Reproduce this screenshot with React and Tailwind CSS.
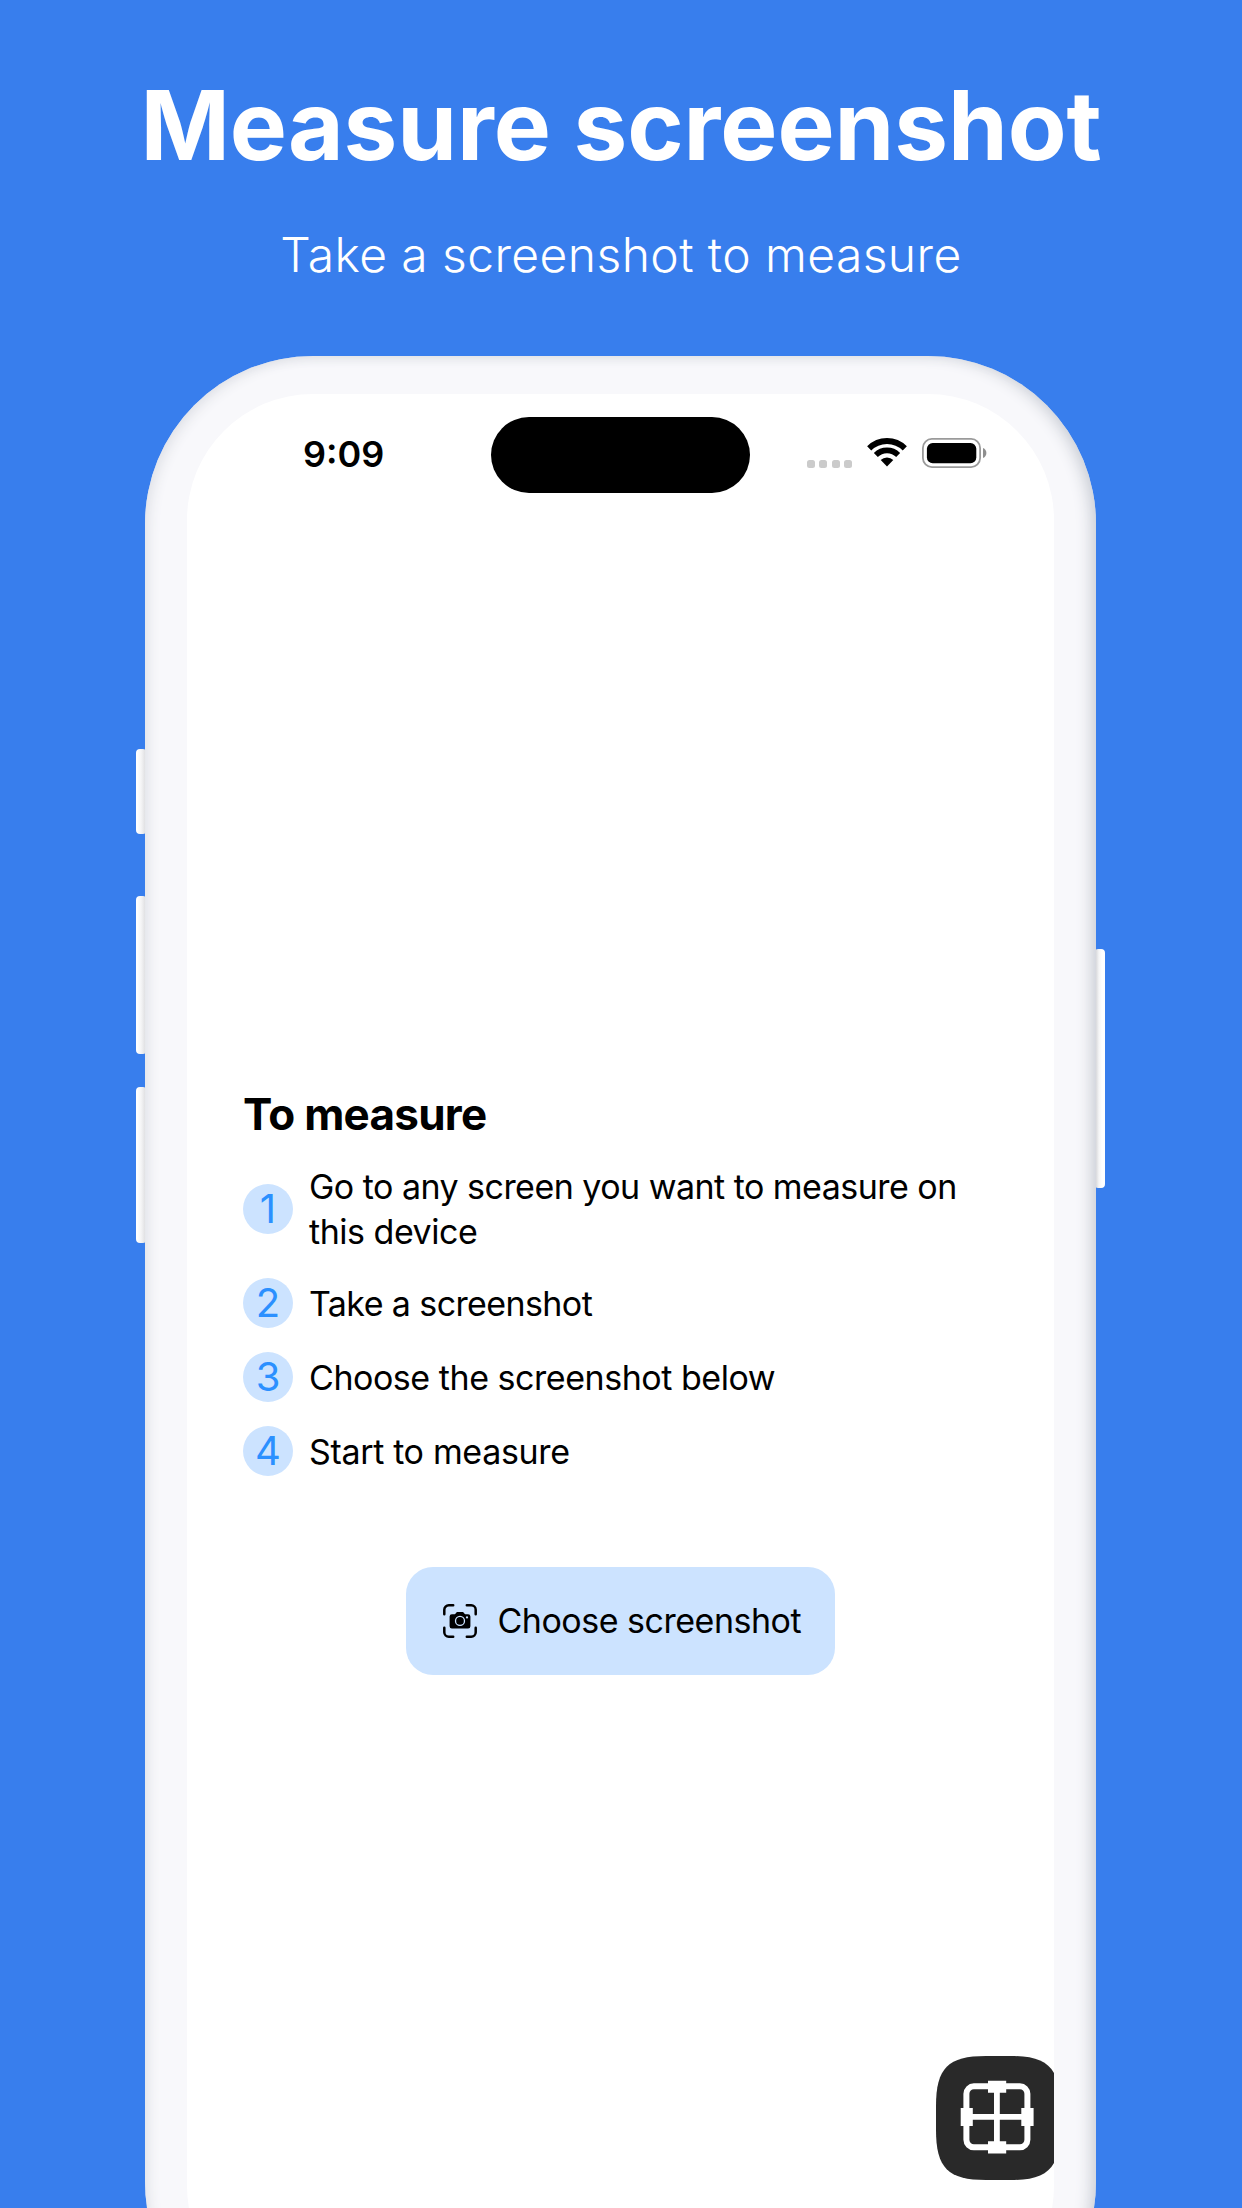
const steps = [
  { lines: ["Go to any screen you want to measure on", "this device"], tracking: ["tracking-[-0.53px]", "tracking-[-0.48px]"], badge: "mt-[1px]" },
  { lines: ["Take a screenshot"], tracking: ["tracking-[-0.6px]"], badge: "" },
  { lines: ["Choose the screenshot below"], tracking: ["tracking-[-0.46px]"], badge: "" },
  { lines: ["Start to measure"], tracking: ["tracking-[-0.34px]"], badge: "" },
];

function WifiIcon() {
  return (
    <svg className="ml-[15.5px] h-[29px] w-10" viewBox="0 0 40 29" fill="none">
      <path d="M2.18 10.38A25.2 25.2 0 0 1 37.82 10.38" stroke="#000" strokeWidth="5.8" />
      <path d="M8.83 17.03A15.8 15.8 0 0 1 31.17 17.03" stroke="#000" strokeWidth="5.6" />
      <path d="M20 28.6L13.7 22.1A8.9 8.9 0 0 1 26.3 22.1Z" fill="#000" />
    </svg>
  );
}

function BatteryIcon() {
  return (
    <svg className="ml-[15px] h-[30px] w-[65px]" viewBox="0 0 65 30" fill="none">
      <rect x="0.9" y="0.9" width="57.2" height="28.2" rx="9" stroke="#9a9a9a" strokeWidth="1.8" />
      <rect x="4.9" y="5" width="49.4" height="20.2" rx="5.8" fill="#000" />
      <path d="M61 10C63.2 10.8 64.4 12.8 64.4 15S63.2 19.2 61 20Z" fill="#8f8f8f" />
    </svg>
  );
}

function ViewfinderIcon() {
  return (
    <svg className="h-[34px] w-[34px]" viewBox="0 0 34 34" fill="none">
      <path
        d="M1.3 10.2V5.8A4.5 4.5 0 0 1 5.8 1.3H10.2M23.8 1.3H28.2A4.5 4.5 0 0 1 32.7 5.8V10.2M32.7 23.8V28.2A4.5 4.5 0 0 1 28.2 32.7H23.8M10.2 32.7H5.8A4.5 4.5 0 0 1 1.3 28.2V23.8"
        stroke="#000"
        strokeWidth="2.5"
        strokeLinecap="round"
      />
      <path
        d="M8.9 10.2H11.2C12 10.2 12.3 9.9 12.8 9.2C13.4 8.3 13.8 8 14.8 8H19.2C20.2 8 20.6 8.3 21.2 9.2C21.7 9.9 22 10.2 22.8 10.2H25.1A2.3 2.3 0 0 1 27.4 12.5V22.2A2.3 2.3 0 0 1 25.1 24.5H8.9A2.3 2.3 0 0 1 6.6 22.2V12.5A2.3 2.3 0 0 1 8.9 10.2Z"
        fill="#000"
      />
      <circle cx="17" cy="16.9" r="4.5" stroke="#cce3ff" strokeWidth="1.3" />
      <circle cx="24" cy="13.4" r="1.1" fill="#cce3ff" />
    </svg>
  );
}

function MeasureTile() {
  return (
    <svg className="absolute top-[1662px] left-[749px] h-[124px] w-[124px]" viewBox="0 0 124 124" fill="none">
      <path d="M0 50C0 12 12 0 50 0H74C112 0 124 12 124 50V74C124 112 112 124 74 124H50C12 124 0 112 0 74Z" fill="#292929" />
      <rect x="30.4" y="30.3" width="61" height="61" rx="7.5" stroke="#fff" strokeWidth="6" />
      <path d="M60.9 30V92M30 60.9H92" stroke="#fff" strokeWidth="5.8" />
      <path d="M52 24.7H70.2V36.7H52ZM52 85.3H70.2V97.6H52ZM24.7 52H36.8V70.1H24.7ZM85.3 52H97.6V70.1H85.3Z" fill="#fff" />
    </svg>
  );
}

const leftKey = "absolute left-[-9px] w-[10px] rounded-l-[4px] rounded-r-[3px] bg-linear-to-r from-white from-10% via-[#f5f5f6] via-50% to-[#dcdcdf]";

export default function App() {
  return (
    <main className="flex h-[2208px] w-[1242px] flex-col items-center overflow-hidden bg-[#387eed] pt-[67px] font-['Inter',sans-serif] text-black">
      <h1 className="text-[96px] leading-[116px] font-bold tracking-[-0.06px] whitespace-nowrap text-white">Measure screenshot</h1>
      <p className="mt-[42px] text-[48px] leading-[59px] font-light tracking-[0.41px] whitespace-nowrap text-white">Take a screenshot to measure</p>

      <div className="relative mt-[72px] mr-px h-[1994px] w-[951px] shrink-0">
        <div className={`${leftKey} top-[393px] h-[85px]`} />
        <div className={`${leftKey} top-[540px] h-[158px]`} />
        <div className={`${leftKey} top-[731px] h-[156px]`} />
        <div className="absolute top-[592.5px] right-[-9px] h-[239.5px] w-[10px] rounded-l-[3px] rounded-r-[4px] bg-linear-to-l from-white from-30% via-[#f5f5f6] via-60% to-[#d0d1d5]" />

        <div className="relative h-full w-full rounded-[168px] bg-[#f8f8fb] px-[42px] pt-[37.7px] shadow-[inset_10px_6px_14px_-8px_#dcdee4,inset_-11px_3px_16px_-7px_#c6cad2]">
          <section className="relative h-[1918px] overflow-hidden rounded-[126px] bg-white">
            <div className="flex h-[99px] items-center pt-[23.3px]">
              <div className="w-[304.3px] pb-[1px] pl-[116px] text-[36px] leading-[44px] font-semibold">9:09</div>
              <div className="h-[75.7px] w-[258.7px] rounded-full bg-black" />
              <div className="mt-[-4px] flex items-center pl-[56.8px]">
                <div className="mt-[21.5px] flex gap-[4.4px]">
                  {[0, 1, 2, 3].map((n) => (
                    <span key={n} className="h-[8px] w-[8px] rounded-[2.5px] bg-[#cbcbcb]" />
                  ))}
                </div>
                <WifiIcon />
                <BatteryIcon />
              </div>
            </div>

            <div className="mt-[595.3px] pl-[56px]">
              <h2 className="text-[44px] leading-[53px] font-bold tracking-[-0.73px]">To measure</h2>
              <ol className="mt-[23px] flex flex-col gap-[24.1px]">
                {steps.map((step, i) => (
                  <li key={i} className="flex min-h-[50px] items-center gap-[16px]">
                    <span className={`${step.badge} flex h-[50px] w-[50px] items-center justify-center rounded-full bg-[#cce3ff] text-[40px] leading-[50px] text-[#2b90ff]`}>
                      {i + 1}
                    </span>
                    <span className="flex flex-col text-[34px] leading-[45px]">
                      {step.lines.map((line, j) => (
                        <span key={j} className={step.tracking[j]}>{line}</span>
                      ))}
                    </span>
                  </li>
                ))}
              </ol>
            </div>

            <button className="mx-auto mt-[90.3px] flex h-[108.4px] w-[429px] items-center rounded-[27px] bg-[#cce3ff] pl-[37px] text-[34px] leading-[45px] tracking-[-0.49px]">
              <ViewfinderIcon />
              <span className="ml-[20.5px] whitespace-nowrap">Choose screenshot</span>
            </button>

            <MeasureTile />
          </section>
        </div>
      </div>
    </main>
  );
}
